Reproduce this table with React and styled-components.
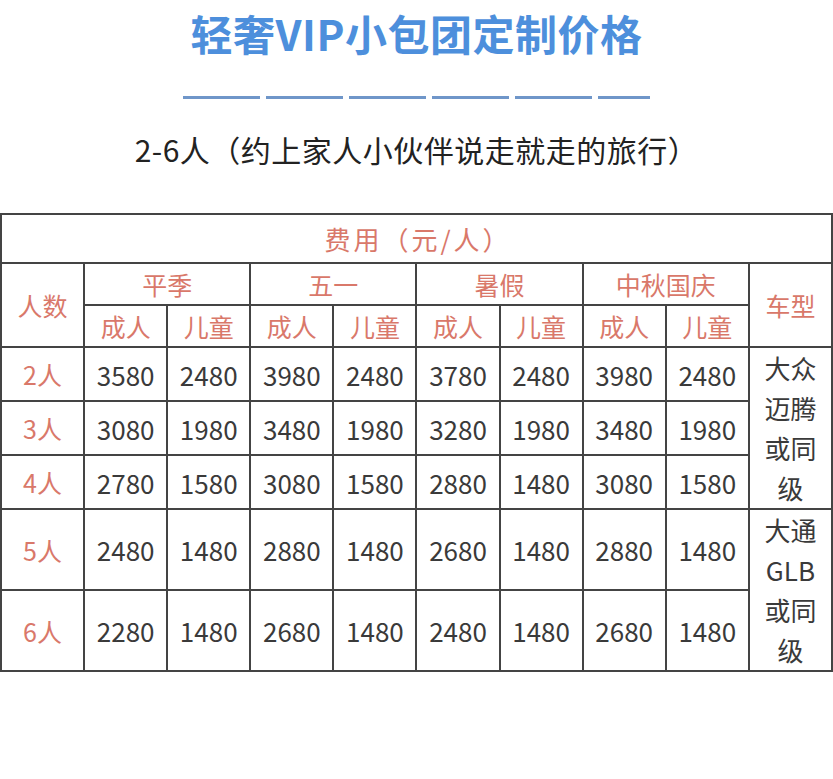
import React from "react";
import styled, { createGlobalStyle } from "styled-components";

const GlobalStyle = createGlobalStyle`
  html, body {
    margin: 0;
    padding: 0;
    background: #fff;
  }
  body {
    font-family: "Noto Sans CJK SC", "Noto Sans", sans-serif;
    text-spacing-trim: space-all;
  }
`;

// Styled Components

const Page = styled.main`
  width: 833px;
  display: flex;
  flex-direction: column;
  align-items: center;
  background: #fff;
`;

const Title = styled.h1`
  margin: 0;
  padding-top: 4px;
  font-size: 42px;
  line-height: 58px;
  font-weight: 700;
  color: #4d8fdc;
  letter-spacing: 0.5px;
`;

const DashLine = styled.div`
  width: 467px;
  height: 3px;
  margin-top: 34px;
  background: repeating-linear-gradient(
    to right,
    #6f96c9 0,
    #6f96c9 77px,
    transparent 77px,
    transparent 83px
  );
`;

const Subtitle = styled.h2`
  margin: 30px 0 0;
  font-size: 30px;
  line-height: 40px;
  font-weight: 400;
  color: #222;
  letter-spacing: 0.5px;
`;

const Table = styled.table`
  margin-top: 44px;
  width: 833px;
  table-layout: fixed;
  border-collapse: collapse;
  border: 2px solid #444;
`;

const Cell = styled.td`
  border: 2px solid #444;
  padding: 0;
  text-align: center;
  vertical-align: middle;
  font-size: ${(p) => (p.$label ? "25px" : "26px")};
  color: ${(p) => (p.$label ? "#d9786a" : "#3a3a3a")};
  height: ${(p) => p.$h || "auto"};
  line-height: ${(p) => p.$lh || "normal"};
`;

const CaptionCell = styled(Cell)`
  font-size: 26px;
  letter-spacing: 3px;
  padding-left: 3px;
`;

const seasons = ["平季", "五一", "暑假", "中秋国庆"];

const rows = [
  { people: "2人", prices: [3580, 2480, 3980, 2480, 3780, 2480, 3980, 2480], h: "50px" },
  { people: "3人", prices: [3080, 1980, 3480, 1980, 3280, 1980, 3480, 1980], h: "50px" },
  { people: "4人", prices: [2780, 1580, 3080, 1580, 2880, 1480, 3080, 1580], h: "50px" },
  { people: "5人", prices: [2480, 1480, 2880, 1480, 2680, 1480, 2880, 1480], h: "77px" },
  { people: "6人", prices: [2280, 1480, 2680, 1480, 2480, 1480, 2680, 1480], h: "77px" },
];

const cars = {
  0: ["大众", "迈腾", "或同", "级"],
  3: ["大通", "GLB", "或同", "级"],
};

function App() {
  return (
    <Page>
      <GlobalStyle />
      <Title>轻奢VIP小包团定制价格</Title>
      <DashLine />
      <Subtitle>2-6人（约上家人小伙伴说走就走的旅行）</Subtitle>
      <Table>
        <tbody>
          <tr>
            <CaptionCell $label colSpan={10} $h="47px">
              费用（元/人）
            </CaptionCell>
          </tr>
          <tr>
            <Cell $label rowSpan={2}>
              人数
            </Cell>
            {seasons.map((s) => (
              <Cell $label colSpan={2} key={s} $h="40px">
                {s}
              </Cell>
            ))}
            <Cell $label rowSpan={2}>
              车型
            </Cell>
          </tr>
          <tr>
            {seasons.map((s) => (
              <React.Fragment key={s}>
                <Cell $label $h="40px">成人</Cell>
                <Cell $label $h="40px">儿童</Cell>
              </React.Fragment>
            ))}
          </tr>
          {rows.map((row, i) => (
            <tr key={row.people}>
              <Cell $label $h={row.h}>
                {row.people}
              </Cell>
              {row.prices.map((p, j) => (
                <Cell key={j} $h={row.h}>
                  {p}
                </Cell>
              ))}
              {cars[i] && (
                <Cell rowSpan={i === 0 ? 3 : 2} $lh="40px">
                  {cars[i].map((line, k) => (
                    <div key={k}>{line}</div>
                  ))}
                </Cell>
              )}
            </tr>
          ))}
        </tbody>
      </Table>
    </Page>
  );
}

export default App;
